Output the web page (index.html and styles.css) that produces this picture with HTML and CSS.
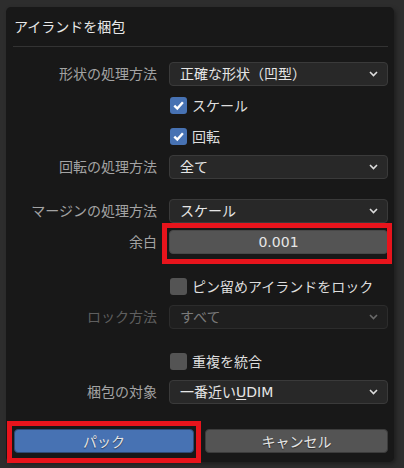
FILE: index.html
```html
<!DOCTYPE html>
<html lang="ja">
  <head>
    <meta charset="UTF-8" />
    <meta name="viewport" content="width=device-width, initial-scale=1.0" />
    <title>アイランドを梱包</title>
    <link rel="stylesheet" href="styles.css">
  </head>
  <body>
    <div class="dialog">
      <div class="title">アイランドを梱包</div>
      <div class="rule"></div>

      <div class="form">
        <div class="row">
          <span class="label">形状の処理方法</span>
          <div class="select">正確な形状（凹型）<svg class="chev" width="9" height="6" viewBox="0 0 9 6"><path d="M1 1l3.5 3.5L8 1" /></svg></div>
        </div>
        <div class="row">
          <span class="label"></span>
          <div class="check on"><span class="box"><svg width="13" height="13" viewBox="0 0 13 13"><path d="M2.3 6.6l3 3 5.6-6.4" /></svg></span>スケール</div>
        </div>
        <div class="row">
          <span class="label"></span>
          <div class="check on"><span class="box"><svg width="13" height="13" viewBox="0 0 13 13"><path d="M2.3 6.6l3 3 5.6-6.4" /></svg></span>回転</div>
        </div>
        <div class="row">
          <span class="label">回転の処理方法</span>
          <div class="select">全て<svg class="chev" width="9" height="6" viewBox="0 0 9 6"><path d="M1 1l3.5 3.5L8 1" /></svg></div>
        </div>

        <div class="row group">
          <span class="label">マージンの処理方法</span>
          <div class="select">スケール<svg class="chev" width="9" height="6" viewBox="0 0 9 6"><path d="M1 1l3.5 3.5L8 1" /></svg></div>
        </div>
        <div class="row">
          <span class="label">余白</span>
          <div class="number">0.001</div>
        </div>

        <div class="row group">
          <span class="label"></span>
          <div class="check"><span class="box"></span>ピン留めアイランドをロック</div>
        </div>
        <div class="row disabled">
          <span class="label">ロック方法</span>
          <div class="select">すべて<svg class="chev" width="9" height="6" viewBox="0 0 9 6"><path d="M1 1l3.5 3.5L8 1" /></svg></div>
        </div>

        <div class="row group">
          <span class="label"></span>
          <div class="check"><span class="box"></span>重複を統合</div>
        </div>
        <div class="row">
          <span class="label">梱包の対象</span>
          <div class="select">一番近い<u>U</u>DIM<svg class="chev" width="9" height="6" viewBox="0 0 9 6"><path d="M1 1l3.5 3.5L8 1" /></svg></div>
        </div>
      </div>

      <div class="actions">
        <button class="btn primary">パック</button>
        <button class="btn">キャンセル</button>
      </div>
    </div>

    <!-- highlight marks -->
    <div class="mark mark-margin"></div>
    <div class="mark mark-pack"></div>
  </body>
</html>
```

FILE: styles.css
```css
* {
  padding: 0;
  margin: 0;
  box-sizing: border-box;
}
body {
  width: 404px;
  height: 468px;
  background: #2d2d2d;
  padding: 7px 10px 6px 6px;
  font-family: "DejaVu Sans", "Noto Sans CJK JP", sans-serif;
  font-size: 14px;
  color: #e6e6e6;
  position: relative;
  overflow: hidden;
}
.dialog {
  width: 388px;
  height: 455px;
  background: #181818;
  border-radius: 5px;
  box-shadow: 2px 2px 4px rgba(0, 0, 0, 0.35);
  display: flex;
  flex-direction: column;
}
.title {
  margin-top: 10px;
  padding-left: 8px;
  line-height: 20px;
  color: #e8e8e8;
}
.rule {
  height: 1px;
  margin: 9px 6px 0 7px;
  background: #333333;
}
.form {
  margin-top: 15px;
  padding: 0 6px 0 7px;
  display: flex;
  flex-direction: column;
  gap: 7px;
}
.row {
  height: 24px;
  display: flex;
  align-items: center;
  gap: 12px;
}
.row.group {
  margin-top: 13px;
}
.label {
  width: 144px;
  flex: none;
  text-align: right;
  color: #a3a3a3;
  line-height: 24px;
}
.select {
  flex: 1;
  height: 24px;
  display: flex;
  align-items: center;
  padding: 0 9px 0 10px;
  background: #282828;
  border: 1px solid #3a3a3a;
  border-radius: 4px;
  color: #e6e6e6;
  line-height: 22px;
}
.select u {
  text-underline-offset: 2px;
}
.chev {
  margin-left: auto;
}
.chev path {
  fill: none;
  stroke: #dcdcdc;
  stroke-width: 1.6;
}
.number {
  flex: 1;
  height: 24px;
  background: #545454;
  border: 1px solid #484848;
  border-radius: 4px;
  text-align: center;
  line-height: 22px;
  color: #e6e6e6;
}
.check {
  display: flex;
  align-items: center;
  gap: 5px;
  margin-left: 1px;
  color: #dedede;
}
.box {
  width: 17px;
  height: 17px;
  border-radius: 3px;
  background: #545454;
  display: flex;
  align-items: center;
  justify-content: center;
}
.check.on .box {
  background: #4772b3;
}
.box path {
  fill: none;
  stroke: #ffffff;
  stroke-width: 2.4;
}
.row.disabled .label {
  color: #5f5f5f;
}
.row.disabled .select {
  background: #1f1f1f;
  border-color: #2c2c2c;
  color: #7a7a7a;
}
.row.disabled .chev path {
  stroke: #6a6a6a;
}
.actions {
  margin-top: 25px;
  padding: 0 6px 0 8px;
  display: flex;
  gap: 11px;
}
.btn {
  height: 24px;
  flex: 1;
  border: 1px solid #3c3c3c;
  border-radius: 4px;
  background: #545454;
  color: #e6e6e6;
  font-family: inherit;
  font-size: 14px;
  text-shadow: 0 1px 1px rgba(0, 0, 0, 0.5);
}
.btn.primary {
  flex: none;
  width: 180px;
  background: #4772b3;
  border-color: #2e4a75;
}
.mark {
  position: absolute;
  border: 5px solid #e8141c;
}
.mark-margin {
  left: 162px;
  top: 223px;
  width: 230px;
  height: 41px;
}
.mark-pack {
  left: 7px;
  top: 421px;
  width: 194px;
  height: 42px;
}
```
